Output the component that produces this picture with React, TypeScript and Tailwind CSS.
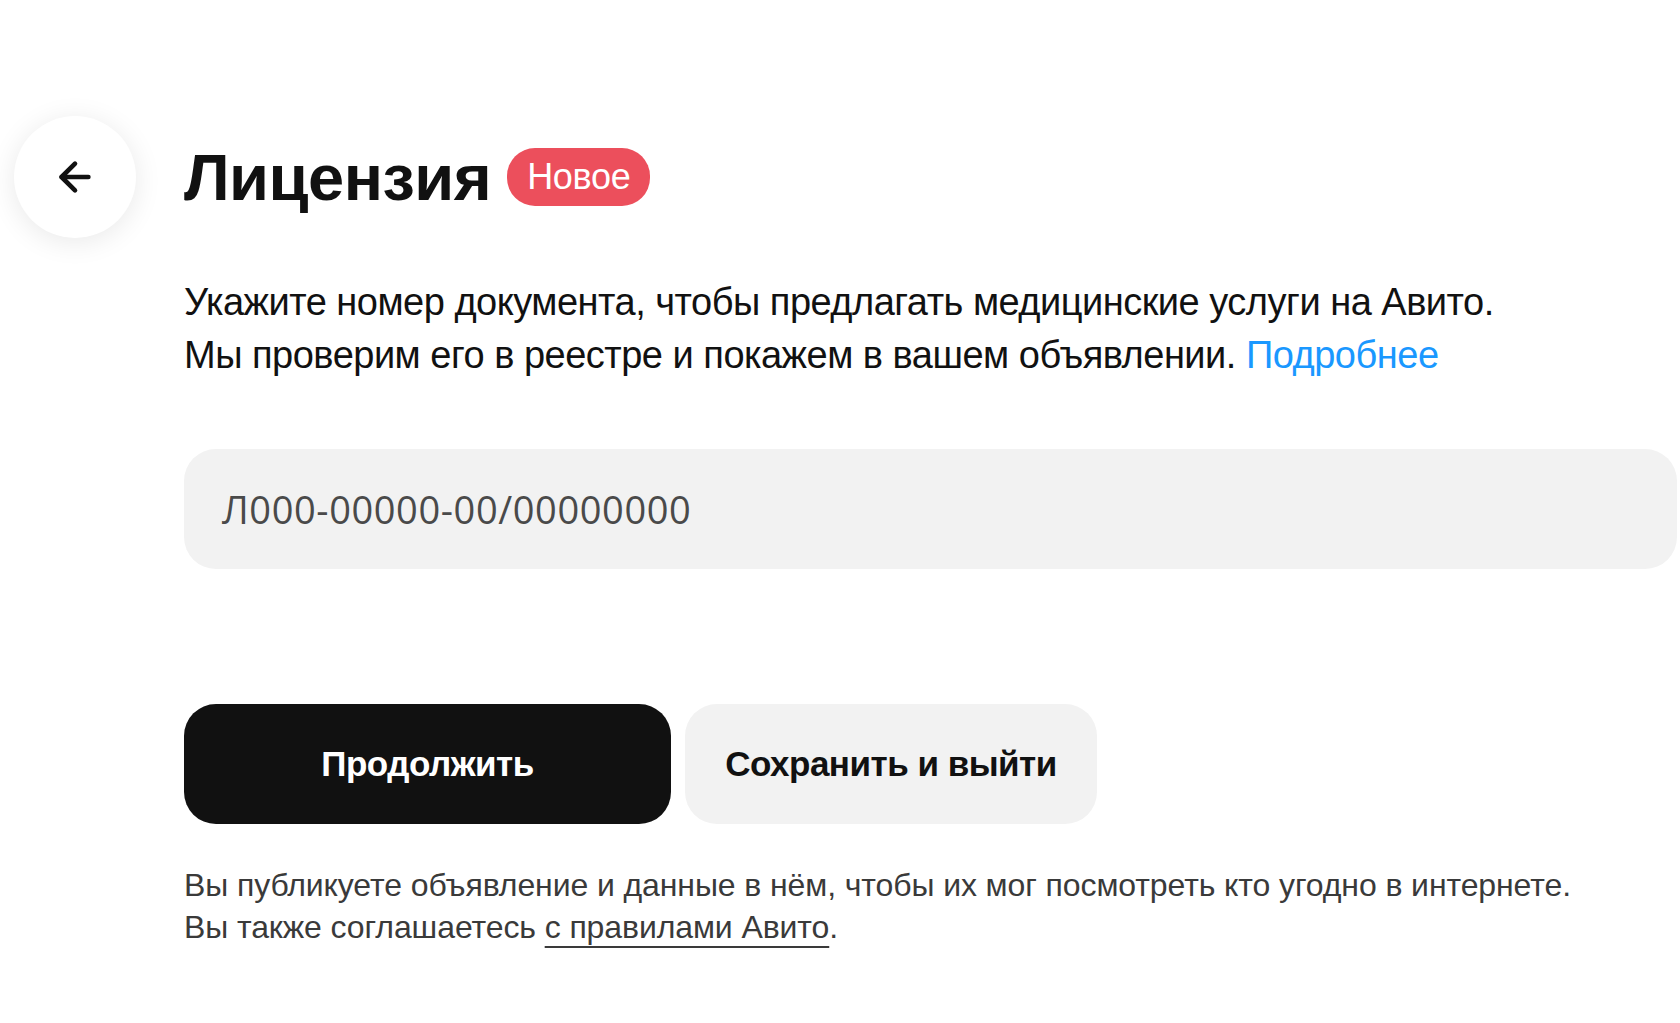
import { ArrowLeft } from "lucide-react";

export default function App() {
  return (
    <main
      className="min-h-screen bg-white text-[#111] flex pt-[116px]"
      style={{ fontFamily: '"Liberation Sans", Arial, sans-serif' }}
    >
      {/* back button column */}
      <div className="w-[184px] shrink-0 pl-[14px]">
        <button className="w-[122px] h-[122px] rounded-full bg-white shadow-[0_4px_28px_rgba(0,0,0,0.09)] flex items-center justify-center">
          <ArrowLeft size={46} strokeWidth={2.4} color="#111" />
        </button>
      </div>

      {/* content */}
      <div className="flex-1 min-w-0">
        <div className="h-[122px] flex items-center gap-[16px]">
          <h1 className="text-[65px] font-bold tracking-[-0.5px] leading-none">Лицензия</h1>
          <span className="h-[58px] px-[20px] rounded-[28px] bg-[#ec4f5c] text-white text-[36px] tracking-[-0.3px] flex items-center">
            Новое
          </span>
        </div>

        <p className="mt-[38px] text-[38px] leading-[53px] tracking-[-0.5px] text-[#111]">
          Укажите номер документа, чтобы предлагать медицинские услуги на Авито.
          <br />
          Мы проверим его в реестре и покажем в вашем объявлении.{" "}
          <a href="#" className="text-[#1a98ff]">Подробнее</a>
        </p>

        <div className="mt-[67px] mr-[3px] h-[120px] rounded-[32px] bg-[#f2f2f2] flex items-center pl-[38px]">
          <span
            className="text-[38px] text-[#4a4a4a] tracking-[0.6px]"
            style={{ fontFamily: '"Open Sans", sans-serif' }}
          >
            Л000-00000-00/00000000
          </span>
        </div>

        <div className="mt-[135px] flex gap-[14px]">
          <button className="w-[487px] h-[120px] rounded-[32px] bg-[#111] text-white text-[35px] font-bold tracking-[-0.5px]">
            Продолжить
          </button>
          <button className="w-[412px] h-[120px] rounded-[32px] bg-[#f2f2f2] text-[#111] text-[35px] font-bold tracking-[-0.5px]">
            Сохранить и выйти
          </button>
        </div>

        <p className="mt-[40px] text-[32px] leading-[42px] tracking-[-0.1px] text-[#3a3a3a]">
          Вы публикуете объявление и данные в нём, чтобы их мог посмотреть кто угодно в интернете.
          <br />
          Вы также соглашаетесь{" "}
          <a href="#" className="underline underline-offset-[8px] decoration-[2px]">с правилами Авито</a>.
        </p>
      </div>
    </main>
  );
}
